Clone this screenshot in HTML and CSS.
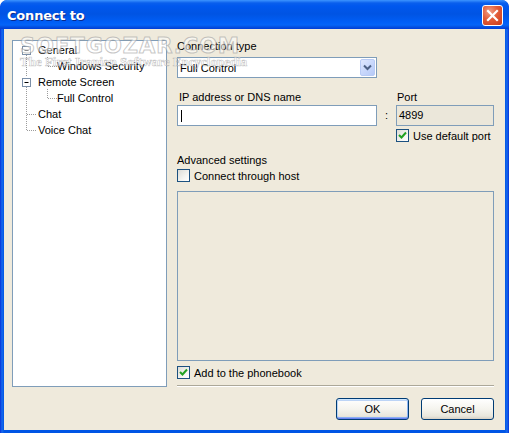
FILE: index.html
```html
<!DOCTYPE html>
<html>
<head>
<meta charset="utf-8">
<link rel="stylesheet" href="styles.css">
</head>
<body>
<div class="window">
  <div class="titlebar">
    <span class="title">Connect to</span>
    <span class="close">
      <svg width="13" height="13" viewBox="0 0 13 13"><path d="M2 2 L11 11 M11 2 L2 11" stroke="#fff" stroke-width="2.2" stroke-linecap="square"/></svg>
    </span>
  </div>
  <div class="client">
    <div class="tree">
      <svg class="treelines" width="150" height="100" viewBox="0 0 150 100">
        <g stroke="#9c9c9c" stroke-width="1" stroke-dasharray="1 1" fill="none">
          <path d="M13.5 14 V36"/>
          <path d="M13.5 46 V89"/>
          <path d="M14 73.5 H24"/>
          <path d="M14 89.5 H24"/>
          <path d="M34.5 16 V25"/>
          <path d="M35 25.5 H44"/>
          <path d="M34.5 48 V57"/>
          <path d="M35 57.5 H44"/>
        </g>
        <g>
          <rect x="9.5" y="5.5" width="8" height="8" fill="#fff" stroke="#7b8fa8"/>
          <path d="M11.5 9.5 H15.5" stroke="#000"/>
          <rect x="9.5" y="37.5" width="8" height="8" fill="#fff" stroke="#7b8fa8"/>
          <path d="M11.5 41.5 H15.5" stroke="#000"/>
        </g>
      </svg>
      <div class="node l0">General</div>
      <div class="node l1">Windows Security</div>
      <div class="node l0">Remote Screen</div>
      <div class="node l1">Full Control</div>
      <div class="node l0">Chat</div>
      <div class="node l0">Voice Chat</div>
    </div>
    <div class="panel">
      <div class="label first">Connection type</div>
      <div class="combo">
        <span class="combo-text">Full Control</span>
        <span class="combo-btn">
          <svg width="9" height="7" viewBox="0 0 9 7"><path d="M1 1.5 L4.5 5 L8 1.5" stroke="#4d6185" stroke-width="2" fill="none"/></svg>
        </span>
      </div>
      <div class="addr-labels">
        <span class="label">IP address or DNS name</span>
        <span></span>
        <span class="label">Port</span>
      </div>
      <div class="addr-inputs">
        <div class="input"><span class="caret"></span></div>
        <span class="colon">:</span>
        <div class="input disabled">4899</div>
      </div>
      <div class="port-check">
        <label class="check portcol"><span class="box checked"><svg width="9" height="9" viewBox="0 0 9 9"><path d="M1 4 L3.5 6.5 L8 1.5" stroke="#21a121" stroke-width="2" fill="none"/></svg></span>Use default port</label>
      </div>
      <div class="label adv">Advanced settings</div>
      <label class="check host"><span class="box"></span>Connect through host</label>
      <div class="group"></div>
      <label class="check phone"><span class="box checked"><svg width="9" height="9" viewBox="0 0 9 9"><path d="M1 4 L3.5 6.5 L8 1.5" stroke="#21a121" stroke-width="2" fill="none"/></svg></span>Add to the phonebook</label>
      <div class="sep"></div>
      <div class="buttons">
        <button class="btn default">OK</button>
        <button class="btn">Cancel</button>
      </div>
    </div>
  </div>
  <div class="watermark">
    <div class="wm1">SOFTGOZAR.COM</div>
    <div class="wm2">The First Iranian Software Encyclopedia</div>
  </div>
</div>
</body>
</html>
```
FILE: styles.css
```css
html, body {
  margin: 0;
  padding: 0;
  background: #fff;
}
.window {
  position: relative;
  width: 509px;
  height: 433px;
  background: linear-gradient(to right, #0831d9 0, #166aee 2px, #0055e5 4px, #0055e5 505px, #166aee 507px, #0831d9 509px);
  display: flex;
  flex-direction: column;
  font-family: "Liberation Sans", Arial, sans-serif;
  font-size: 11px;
  color: #000;
  overflow: hidden;
  border-radius: 7px 7px 0 0;
}
.titlebar {
  height: 29px;
  flex: none;
  display: flex;
  align-items: center;
  justify-content: space-between;
  padding: 0 6px 0 7px;
  background: linear-gradient(to bottom, #3d95ff 0, #0a5fed 3px, #0058ee 6px, #0054e3 14px, #005ef6 22px, #0464f8 25px, #0450e0 27px, #003dd7 29px);
  border-radius: 7px 7px 0 0;
}
.title {
  color: #fff;
  font-family: "DejaVu Sans", "Liberation Sans", sans-serif;
  font-weight: bold;
  font-size: 13px;
  letter-spacing: -0.2px;
  text-shadow: 1px 1px 0 #0a2a8c;
  padding-top: 1px;
}
.close {
  width: 19px;
  height: 19px;
  border: 1px solid #fff;
  border-radius: 3px;
  background: radial-gradient(circle at 35% 30%, #f0a088 0, #e25c38 45%, #c8391a 100%);
  display: flex;
  align-items: center;
  justify-content: center;
  margin-top: 2px;
}
.client {
  flex: 1;
  margin: 0 4px 3px 4px;
  background: #efeadc;
  display: flex;
  padding: 11px 11px 0 8px;
  gap: 10px;
}
.tree {
  position: relative;
  width: 153px;
  height: 344px;
  border: 1px solid #7f9db9;
  background: #fff;
  padding-top: 1px;
  box-sizing: content-box;
}
.treelines {
  position: absolute;
  left: 0;
  top: 0;
}
.node {
  position: relative;
  height: 16px;
  line-height: 16px;
  white-space: nowrap;
}
.node.l0 { padding-left: 25px; }
.node.l1 { padding-left: 44px; }
.panel {
  width: 317px;
  display: flex;
  flex-direction: column;
}
.label {
  line-height: 13px;
  height: 13px;
  white-space: nowrap;
}
.label.first { margin-top: 0; }
.combo {
  margin-top: 4px;
  height: 19px;
  width: 198px;
  border: 1px solid #7f9db9;
  background: #fff;
  display: flex;
  align-items: center;
  justify-content: space-between;
}
.combo-text {
  padding-left: 2px;
}
.combo-btn {
  width: 15px;
  height: 17px;
  margin-right: 1px;
  border-radius: 2px;
  border: 1px solid #b8cbf5;
  box-sizing: border-box;
  background: linear-gradient(135deg, #dfe8fe 0, #c5d5fb 60%, #b6c9f7 100%);
  display: flex;
  align-items: center;
  justify-content: center;
}
.addr-labels, .addr-inputs, .port-check {
  display: grid;
  grid-template-columns: 200px 19px 98px;
}
.addr-labels {
  margin-top: 13px;
}
.addr-labels .label { padding-left: 2px; }
.addr-labels .label:last-child { padding-left: 1px; }
.addr-inputs {
  margin-top: 1px;
  height: 21px;
}
.input {
  border: 1px solid #7f9db9;
  background: #fff;
  line-height: 19px;
  padding-left: 2px;
  display: flex;
  align-items: center;
}
.input.disabled {
  background: #ebe7da;
  color: #000;
}
.caret {
  width: 1px;
  height: 12px;
  background: #000;
  margin-left: 1px;
}
.colon {
  text-align: center;
  line-height: 21px;
  padding-left: 0;
}
.port-check {
  margin-top: 3px;
}
.portcol {
  grid-column: 3;
}
.check {
  display: flex;
  align-items: center;
  height: 13px;
  white-space: nowrap;
}
.box {
  width: 11px;
  height: 11px;
  border: 1px solid #1c5180;
  background: linear-gradient(135deg, #dcdcd7 0, #f4f4f0 60%, #fff 100%);
  margin-right: 4px;
  display: flex;
  align-items: center;
  justify-content: center;
  flex: none;
}
.adv {
  margin-top: 12px;
}
.host {
  margin-top: 2px;
}
.group {
  margin-top: 9px;
  height: 168px;
  border: 1px solid #7f9db9;
}
.phone {
  margin-top: 5px;
}
.sep {
  margin-top: 6px;
  height: 1px;
  border-top: 1px solid #aca899;
  background: #fff;
}
.buttons {
  margin-top: 11px;
  display: flex;
  justify-content: flex-end;
  gap: 12px;
}
.btn {
  width: 73px;
  height: 22px;
  border: 1px solid #003c74;
  border-radius: 3px;
  background: linear-gradient(to bottom, #ffffff 0, #f5f4ee 50%, #e9e7dd 85%, #d6d0c5 100%);
  font-family: "Liberation Sans", Arial, sans-serif;
  font-size: 11px;
  color: #000;
  padding: 0;
}
.btn.default {
  box-shadow: inset 0 1px 0 #cee7ff, inset 0 -1px 0 #6982ee, inset 1px 0 0 #b8d4f7, inset -1px 0 0 #8cb4f2, inset 0 2px 0 #bcd4f6, inset 0 -2px 0 #89adf4;
}
.watermark {
  position: absolute;
  left: 20px;
  top: 35px;
  pointer-events: none;
  color: rgba(255,255,255,0.55);
}
.wm1 {
  font-family: "DejaVu Sans", sans-serif;
  font-weight: bold;
  font-size: 21px;
  letter-spacing: 1px;
  line-height: 22px;
  -webkit-text-stroke: 1px rgba(150,150,150,0.55);
}
.wm2 {
  font-family: "Liberation Serif", serif;
  font-weight: bold;
  font-size: 13px;
  line-height: 13px;
  margin-top: -2px;
  -webkit-text-stroke: 0.6px rgba(150,150,150,0.55);
}
```
